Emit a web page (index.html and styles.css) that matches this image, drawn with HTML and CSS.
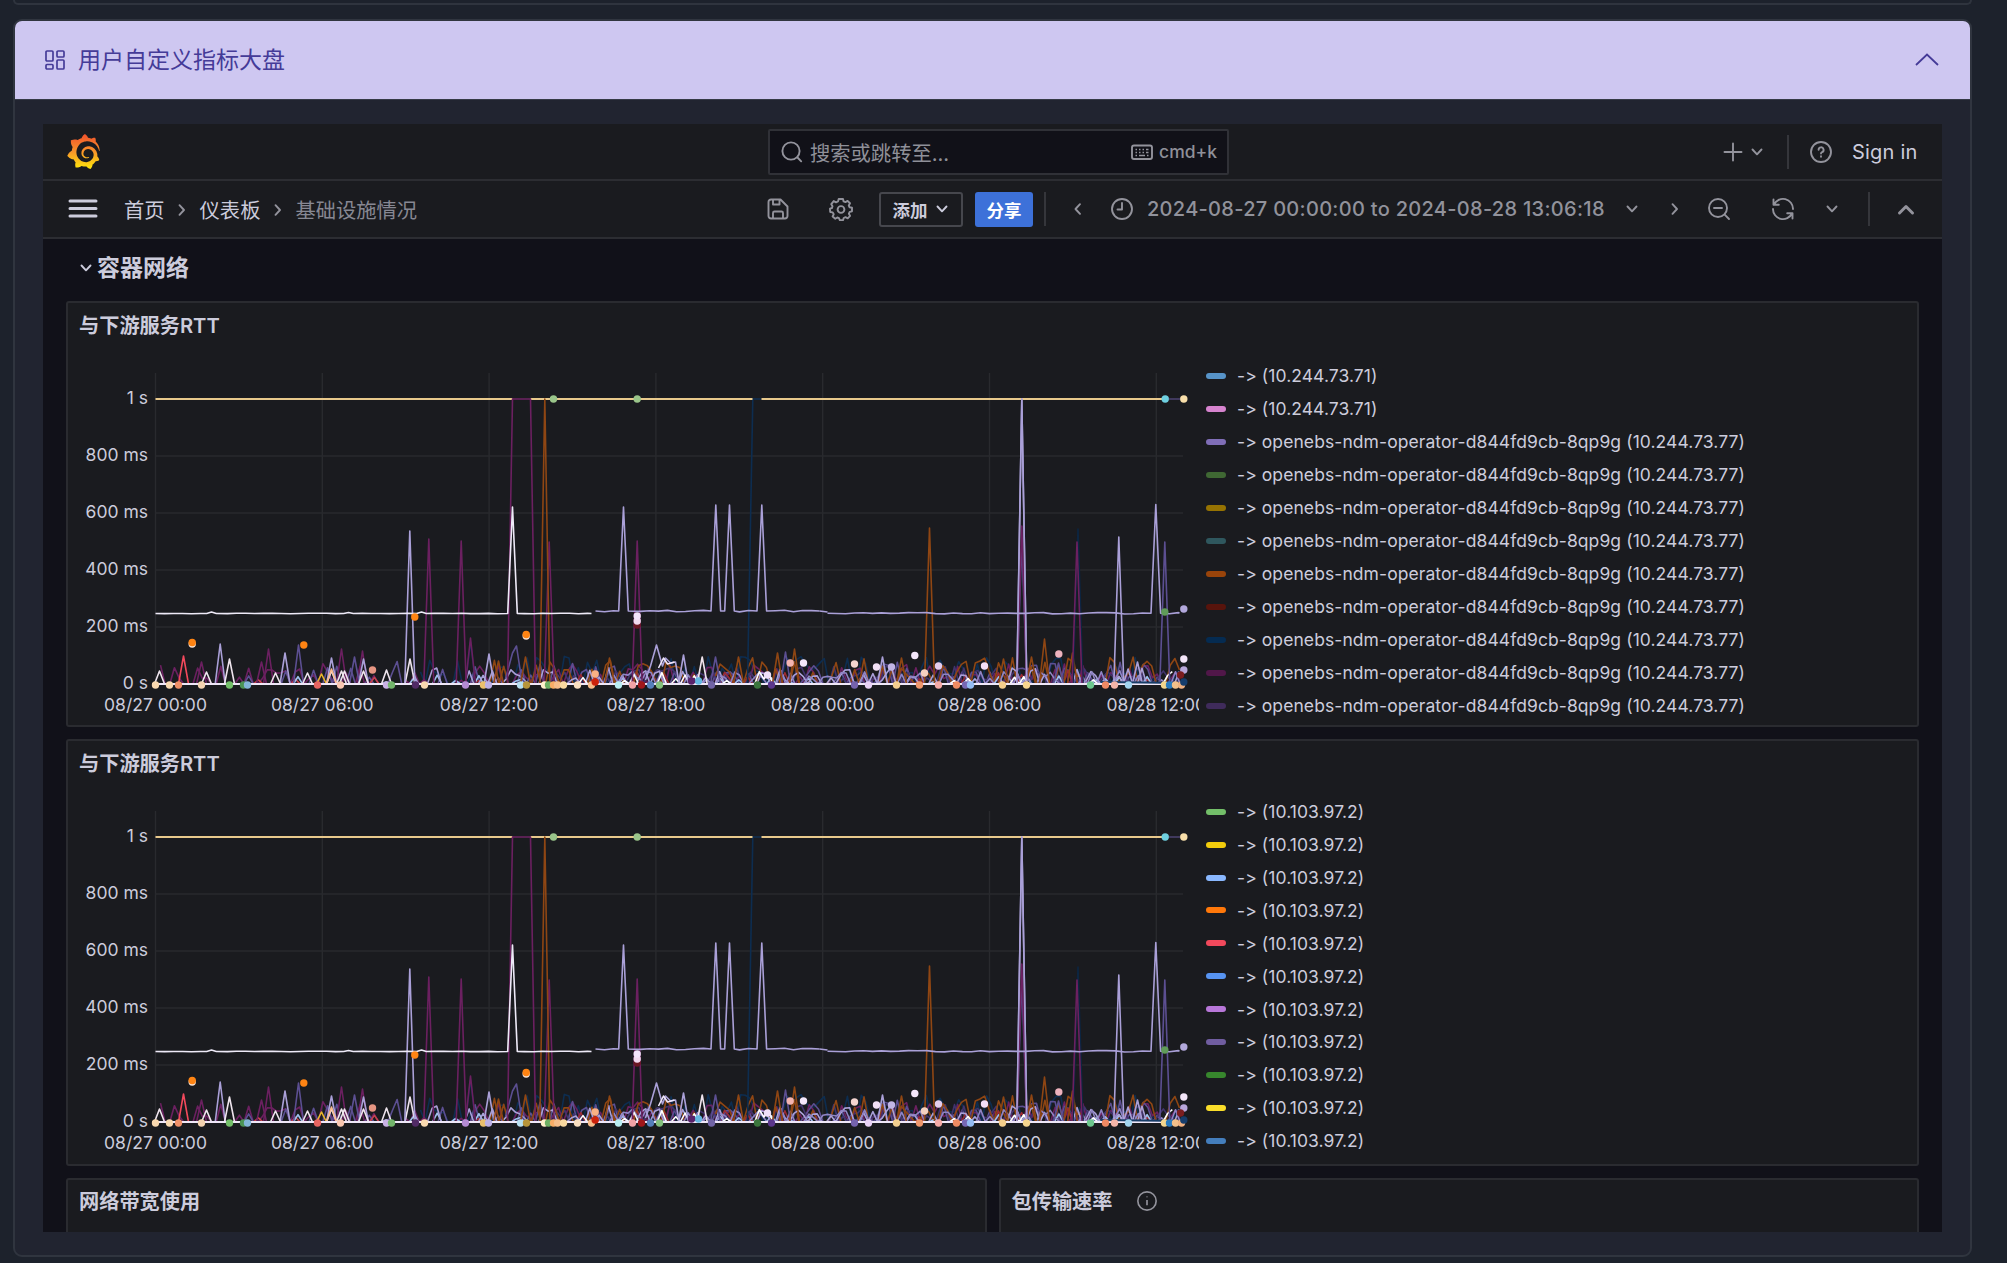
FILE: index.html
```html
<!DOCTYPE html>
<html lang="zh-CN">
<head>
<meta charset="utf-8">
<title>用户自定义指标大盘</title>
<link rel="stylesheet" href="styles.css">
</head>
<body>
<svg class="defs" width="0" height="0">
  <defs>
    <symbol id="down" viewBox="0 0 16 16"><path d="M3.5 5.5 8 10.3l4.500-4.800"/></symbol>
    <symbol id="right" viewBox="0 0 16 16"><path d="M5.500 3.200 10 8l-4.500 4.800"/></symbol>
    <symbol id="left" viewBox="0 0 16 16"><path d="M10 3.200 5.500 8l4.500 4.800"/></symbol>
  </defs>
</svg>
<div class="previous-card"></div>
<section class="card">
  <header class="card-header">
    <svg class="grid-icon" viewBox="0 0 20 20"><rect x="1" y="1" width="7" height="10" rx="1"/><rect x="12" y="1" width="7" height="6" rx="1"/><rect x="1" y="14.500" width="7" height="4.500" rx="1"/><rect x="12" y="10" width="7" height="9" rx="1"/></svg>
    <h1>用户自定义指标大盘</h1>
    <svg class="collapse-icon" viewBox="0 0 24 14"><path d="M1 12 12 1.500 23 12"/></svg>
  </header>
  <div class="card-body">
    <main class="frame">
      <nav class="topnav">
        <svg class="logo" viewBox="0 0 24 24"><defs><linearGradient id="lg" x1="0" y1="1" x2="0" y2="0"><stop offset="0" stop-color="#ffe80a"/><stop offset=".5" stop-color="#f8942a"/><stop offset="1" stop-color="#f0502c"/></linearGradient></defs><path fill="url(#lg)" d="M23.02 10.59a8.578 8.578 0 0 0-.862-3.034 8.911 8.911 0 0 0-1.789-2.445c.337-1.342-.413-2.505-.413-2.505-1.292-.08-2.113.4-2.416.62-.052-.02-.102-.044-.154-.064-.22-.089-.446-.172-.677-.247-.231-.073-.47-.14-.711-.197a9.867 9.867 0 0 0-.875-.161C14.557.753 12.94 0 12.94 0c-1.804 1.145-2.147 2.744-2.147 2.744l-.018.093c-.098.029-.2.057-.298.088-.138.042-.275.094-.413.143-.138.055-.275.107-.41.166a8.869 8.869 0 0 0-1.557.87l-.063-.029c-2.497-.955-4.716.195-4.716.195-.203 2.658.996 4.33 1.235 4.636a11.608 11.608 0 0 0-.607 2.635C1.636 12.677.953 15.014.953 15.014c1.926 2.214 4.171 2.351 4.171 2.351.003-.002.006-.002.006-.005.285.509.615.994.986 1.446.156.19.32.371.488.548-.704 2.009.099 3.68.099 3.68 2.144.08 3.553-.937 3.849-1.173a9.784 9.784 0 0 0 3.164.501h.08l.055-.003.107-.002.103-.005.003.002c1.010 1.440 2.788 1.646 2.788 1.646 1.264-1.332 1.337-2.653 1.337-2.940v-.058c0-.02-.003-.039-.003-.06.265-.187.52-.387.758-.6a7.875 7.875 0 0 0 1.415-1.700c1.430.083 2.437-.885 2.437-.885-.236-1.490-1.085-2.216-1.264-2.354l-.018-.013-.016-.013a.217.217 0 0 1-.031-.02c.008-.092.016-.18.02-.27.011-.162.016-.323.016-.48v-.253l-.005-.098-.008-.135a1.891 1.891 0 0 0-.01-.13c-.003-.042-.008-.083-.013-.125l-.016-.124-.018-.122a6.215 6.215 0 0 0-2.032-3.730 6.015 6.015 0 0 0-3.222-1.460 6.292 6.292 0 0 0-.85-.048l-.107.002h-.063l-.044.003-.104.008a4.777 4.777 0 0 0-3.335 1.695c-.332.4-.592.84-.768 1.297a4.594 4.594 0 0 0-.312 1.817l.003.091c.005.055.007.11.013.164a3.615 3.615 0 0 0 .698 1.820 3.530 3.530 0 0 0 1.827 1.282c.33.098.66.14.971.137.039 0 .078 0 .114-.002l.063-.003c.02 0 .041-.003.062-.003.034-.002.065-.007.099-.01.007 0 .018-.003.028-.003l.031-.005.06-.008a1.180 1.180 0 0 0 .112-.02c.036-.008.072-.013.109-.024a2.634 2.634 0 0 0 .914-.415c.028-.02.056-.041.085-.065a.248.248 0 0 0 .039-.35.244.244 0 0 0-.309-.06l-.078.042c-.09.044-.184.083-.283.116a2.476 2.476 0 0 1-.475.096c-.028.003-.054.006-.083.006l-.083.002c-.026 0-.054 0-.08-.002l-.102-.006h-.012l-.024.006c-.016-.003-.031-.003-.044-.006-.031-.002-.06-.007-.091-.01a2.590 2.590 0 0 1-.724-.213 2.557 2.557 0 0 1-.667-.438 2.520 2.520 0 0 1-.805-1.475 2.306 2.306 0 0 1-.029-.444l.006-.122v-.023l.002-.031c.003-.021.003-.04.005-.06a3.163 3.163 0 0 1 1.352-2.290 3.120 3.120 0 0 1 .937-.43 2.946 2.946 0 0 1 .776-.101h.06l.07.002.045.003h.026l.07.005a4.041 4.041 0 0 1 1.635.49 3.940 3.940 0 0 1 1.602 1.662 3.770 3.770 0 0 1 .397 1.414l.005.076.003.075c.002.026.002.05.002.075 0 .024.003.052 0 .07v.065l-.002.073-.008.174a6.195 6.195 0 0 1-.08.639 5.100 5.100 0 0 1-.267.927 5.310 5.310 0 0 1-.624 1.130 5.052 5.052 0 0 1-3.237 2.014 4.820 4.820 0 0 1-.649.066l-.039.003h-.287a6.607 6.607 0 0 1-1.716-.265 6.776 6.776 0 0 1-3.400-2.274 6.750 6.750 0 0 1-.746-1.150 6.616 6.616 0 0 1-.714-2.596l-.005-.083-.002-.02v-.056l-.003-.073v-.096l-.003-.104v-.07l.003-.163c.008-.22.026-.45.054-.678a8.707 8.707 0 0 1 .28-1.355c.128-.444.286-.872.473-1.277a7.040 7.040 0 0 1 1.456-2.100 5.925 5.925 0 0 1 .953-.763c.169-.111.343-.213.524-.306.089-.05.182-.091.273-.135.047-.02.093-.042.138-.062a7.177 7.177 0 0 1 .714-.267l.145-.045c.049-.015.098-.026.148-.041.098-.029.197-.052.296-.076.049-.013.1-.02.15-.033l.15-.032.151-.028.076-.013.075-.01.153-.024c.057-.01.114-.013.171-.023l.169-.021c.036-.003.073-.008.106-.01l.073-.008.036-.003.042-.002c.057-.003.114-.008.171-.01l.086-.006h.023l.037-.003.145-.007a7.999 7.999 0 0 1 1.708.125 7.917 7.917 0 0 1 2.048.68 8.253 8.253 0 0 1 1.672 1.090l.09.077.089.078c.06.052.114.107.171.159.057.052.112.106.166.16.052.055.107.107.159.164a8.671 8.671 0 0 1 1.410 1.978c.012.026.028.052.04.078l.04.078.075.156c.023.051.05.1.07.153l.065.15a8.848 8.848 0 0 1 .45 1.340.19.19 0 0 0 .201.142.186.186 0 0 0 .172-.184c.01-.246.002-.532-.024-.856z"/></svg>
        <div class="search">
          <svg class="icon i24" viewBox="0 0 24 24"><circle cx="11" cy="11" r="8.600"/><path d="m17.500 17.500 3.700 3.800"/></svg>
          <span class="placeholder">搜索或跳转至...</span>
          <svg class="icon i24" viewBox="0 0 24 24"><rect x="2" y="5.500" width="20" height="13.500" rx="2"/><path class="keys" d="M5.500 9.500h1.500m2 0h1.500m2 0H14m2 0h2.500M5.500 12.500H7m2 0h1.500m2 0H14m2 0h2.500M5.500 15.500H7m2 0h6m2 0h1.500"/></svg>
          <kbd>cmd+k</kbd>
        </div>
        <div class="account">
          <svg class="icon i24" viewBox="0 0 24 24"><path d="M12 3.500v17M3.500 12h17"/></svg>
          <svg class="icon i16 plus-caret"><use href="#down"/></svg>
          <i class="rule"></i>
          <svg class="icon i24 help" viewBox="0 0 24 24"><circle cx="12" cy="12" r="10"/><path d="M9.600 9.800a2.500 2.500 0 1 1 3.500 2.300c-.8.400-1.100.7-1.100 1.500M12 16.200v.6"/></svg>
          <a>Sign in</a>
        </div>
      </nav>
      <div class="toolbar">
        <svg class="menu" viewBox="0 0 30 20"><path d="M2 2h26M2 9.500h26M2 17h26"/></svg>
        <div class="crumbs">
          <a>首页</a><svg class="icon i16"><use href="#right"/></svg><a>仪表板</a><svg class="icon i16"><use href="#right"/></svg><span>基础设施情况</span>
        </div>
        <div class="tools">
          <svg class="icon i24 save" viewBox="0 0 24 24"><path d="M5 2.500h9.500l7 7V19a2.500 2.500 0 0 1-2.500 2.500H5A2.500 2.500 0 0 1 2.500 19V5A2.500 2.500 0 0 1 5 2.500ZM7 2.500v5h6.500v-5M7 21.500v-5.500a1.500 1.500 0 0 1 1.500-1.500h7a1.500 1.500 0 0 1 1.500 1.500v5.500"/></svg>
          <svg class="icon i24 gear" viewBox="0 0 24 24"><path d="m9.700 2-.7 2.500-2 .9-2.300-1.300L2.300 7.200l1.200 2L3 11l-2 .6.2 3.400 2.500.4 1 1.900-1.100 2.200 2.700 2.200 2-1.200 1.700.7.800 2h3.200l.7-2.200 1.800-.8 2.200 1.100 2.400-2.400-1.200-2.200.8-1.800 2.300-.6v-3.500l-2.400-.5-.8-1.800L21 6.200l-2.400-2.300-2.200 1.200-1.800-.7L14 2Z"/><circle cx="12" cy="12.500" r="3.400"/></svg>
          <button class="add">添加<svg class="i16"><use href="#down"/></svg></button>
          <button class="share">分享</button>
          <i class="rule r1"></i>
          <svg class="icon i16 prev"><use href="#left"/></svg>
          <svg class="icon i24 clock" viewBox="0 0 24 24"><circle cx="12" cy="12" r="10"/><path d="M12 6v6.500H7.500"/></svg>
          <span class="range">2024-08-27 00:00:00 to 2024-08-28 13:06:18</span>
          <svg class="icon i16 range-caret"><use href="#down"/></svg>
          <svg class="icon i16 next"><use href="#right"/></svg>
          <svg class="icon i24 zoom" viewBox="0 0 24 24"><circle cx="11" cy="11" r="9"/><path d="M7 11h8M17.700 17.700l4.300 4.300"/></svg>
          <svg class="icon i24 refresh" viewBox="0 0 24 24"><path d="M2.500 2.500v5.300h5.300M3 7.500A10 10 0 0 1 22 12M21.500 21.500v-5.300h-5.300M21 16.500A10 10 0 0 1 2 12"/></svg>
          <svg class="icon i16 refresh-caret"><use href="#down"/></svg>
          <i class="rule r2"></i>
          <svg class="icon i24 kiosk" viewBox="0 0 24 24"><path d="m5.500 16 6.500-6.500 6.500 6.500"/></svg>
        </div>
      </div>
      <div class="canvas">
        <h2><svg class="i16"><use href="#down"/></svg>容器网络</h2>
        <section class="panel">
          <h3>与下游服务RTT</h3>
          <div class="panel-body"><svg class="chart" viewBox="0 0 1131 380"></svg><ul class="legend" data-legend="first"></ul></div>
        </section>
        <section class="panel">
          <h3>与下游服务RTT</h3>
          <div class="panel-body"><svg class="chart" viewBox="0 0 1131 380"></svg><ul class="legend second" data-legend="second"></ul></div>
        </section>
        <div class="row">
          <section class="panel"><h3>网络带宽使用</h3></section>
          <section class="panel"><h3>包传输速率<svg class="icon info" viewBox="0 0 24 24"><circle cx="12" cy="12" r="10"/><path d="M12 11v5.500M12 7.200v.8"/></svg></h3></section>
        </div>
      </div>
    </main>
  </div>
</section>
<script src="charts.js"></script>
</body>
</html>
```
FILE: styles.css
```css
* { box-sizing: border-box; }
body { margin: 0; height: 1263px; overflow: hidden; background: #1d222c; font-family: Inter, "Noto Sans CJK SC", sans-serif; font-feature-settings: "calt" 0; color: #ccccdc; }
h1, h2, h3, ul { margin: 0; padding: 0; font-weight: 400; }
svg { display: block; flex: none; }
.defs { height: 0; }
.previous-card { width: 1959px; height: 5px; margin-left: 13px; border: 2px solid #2f343e; border-top: 0; border-radius: 0 0 8px 8px; }
.card { width: 1959px; height: 1238px; margin: 14px 0 0 13px; border: 2px solid #30353f; border-radius: 9px; background: #212430; overflow: hidden; }
.card-header { display: flex; align-items: center; height: 78px; padding: 0 31px 0 30px; background: #cec7f1; color: #453b98; }
.card-header h1 { margin: 0 auto 0 13px; font-size: 23px; line-height: 30px; }
.grid-icon { width: 20px; height: 20px; fill: none; stroke: currentColor; stroke-width: 1.7; }
.collapse-icon { width: 24px; height: 14px; fill: none; stroke: currentColor; stroke-width: 1.8; }
.card-body { padding: 24px 28px 23px; border-top: 1px solid #363b47; }
.frame { height: 1108px; background: #111119; overflow: hidden; }

.i16, .i24 { fill: none; stroke: currentColor; stroke-width: 1.9; stroke-linecap: round; stroke-linejoin: round; }
.i16 { width: 16px; height: 16px; }
.i24 { width: 24px; height: 24px; }
.icon { color: #93939c; }
.rule { width: 2px; height: 34px; background: #35363b; }

.topnav { display: flex; align-items: center; height: 57px; padding: 0 24px 0 25px; background: #1a1b1f; border-bottom: 2px solid #2c2d32; }
.logo { width: 35px; height: 35px; margin-left: -2px; }
.search { display: flex; align-items: center; width: 461px; height: 46px; margin-left: 667px; padding: 0 10px; background: #111118; border: 2px solid #303137; border-radius: 2px; color: #8f9099; }
.placeholder { margin: 0 auto 0 6px; font-size: 20.300px; }
kbd { margin-left: 5px; font: 500 17.500px Inter, sans-serif; }
.keys { stroke-width: 1.4; stroke-linecap: butt; }
.account { display: flex; align-items: center; margin-left: auto; }
.account a { width: 66px; font-size: 20px; letter-spacing: .2px; white-space: nowrap; }
.plus-caret { margin-left: 4px; }
.account .rule { margin: 0 20px 0 22px; }
.help { margin-right: 19px; }

.toolbar { display: flex; align-items: center; height: 58px; padding: 0 24px 0 25px; background: #1a1b1f; border-bottom: 2px solid #2c2d32; }
.menu { width: 30px; height: 20px; stroke: #ccccdc; stroke-width: 3; stroke-linecap: round; }
.crumbs { display: flex; align-items: center; margin-left: 26px; font-size: 20.300px; white-space: nowrap; color: #ccccdc; }
.crumbs svg { margin: 2px 9.500px 0; }
.crumbs span { color: #878893; }
.tools { display: flex; align-items: center; margin-left: auto; white-space: nowrap; }
button { display: flex; align-items: center; justify-content: center; height: 35px; padding: 0; border-radius: 3px; font: 600 17.500px Inter, "Noto Sans CJK SC", sans-serif; margin-right: 12px; }
.add { width: 84px; gap: 6px; color: #ccccdc; background: transparent; border: 2px solid #46474d; }
.share { width: 58px; margin-right: 11px; color: #fff; background: #3d71d9; border: 0; }
.save { margin-right: 39px; }
.gear { margin-right: 26px; }
.r1 { margin-right: 24px; }
.prev { margin-right: 24px; }
.clock { margin-right: 13px; }
.range { width: 458px; margin-right: 19px; font-size: 20px; font-weight: 500; letter-spacing: .3px; color: #91929b; }
.range-caret { margin-right: 27px; }
.next { margin-right: 24px; }
.zoom { margin-right: 40px; }
.refresh { margin-right: 29px; }
.refresh-caret { margin-right: 28px; }
.r2 { margin-right: 24px; }
.kiosk { stroke-width: 3; }

.canvas { display: flex; flex-direction: column; gap: 12px; padding: 0 23px; }
h2 { display: flex; align-items: center; gap: 3px; height: 50px; padding: 3px 0 0 12px; font-size: 23px; font-weight: 600; }
h2 svg { margin-top: 4px; }
.panel { height: 426.300px; background: #1a1b1f; border: 2px solid #2a2b30; border-radius: 3px; overflow: hidden; }
h3 { display: flex; align-items: center; height: 46px; padding: 0 0 4px 11px; font-size: 20.200px; font-weight: 600; }
.panel-body { display: flex; height: 378px; }
.chart { width: 1131px; height: 380px; }
.chart text { font: 400 17.500px Inter, sans-serif; fill: #ccccdc; }
.grid { stroke: #292a2e; stroke-width: 1.4; }
.line { fill: none; stroke-width: 1.6; stroke-linejoin: round; }
.legend { list-style: none; padding: 10px 0 0 7px; height: 367px; overflow: hidden; }
.legend li { display: flex; align-items: center; gap: 11px; height: 33px; font-size: 17.500px; letter-spacing: .08px; line-height: 33px; white-space: nowrap; }
.legend i { width: 20px; height: 6px; border-radius: 3px; }
.legend.second { padding-top: 8px; }
.legend.second li { height: 32.900px; }
.row { display: grid; grid-template-columns: 1fr 1fr; gap: 12px; }
.info { width: 22px; height: 22px; margin-left: 24px; fill: none; stroke: currentColor; stroke-width: 1.8; }
```
FILE: charts.js
```js
// Plot area: 1029px wide, 285px tall for 0..1s; values below are pixel offsets from the axes.
const LEFT = 87.5, BASE = 335, TOP = 285, STEP = 4.64;

const legends = {
  first: [['#5794c9', '-> (10.244.73.71)'], ['#d683ce', '-> (10.244.73.71)']].concat(
    ['#806eb7', '#3f6833', '#967302', '#2f575e', '#99440a', '#58140c', '#052b51', '#511749', '#3f2b5b']
      .map(c => [c, '-> openebs-ndm-operator-d844fd9cb-8qp9g (10.244.73.77)'])),
  second: ['#73bf69', '#f2cc0c', '#8ab8ff', '#ff780a', '#f2495c', '#5794f2', '#b877d9', '#705da0', '#37872d', '#fade2a', '#447ebc']
    .map(c => [c, '-> (10.103.97.2)'])
};

let seed = 71;
const rand = () => (seed = (seed * 16807) % 2147483647) / 2147483647;
const path = pts => 'M' + pts.map(p => (LEFT + p[0]).toFixed(1) + ' ' + (BASE - p[1]).toFixed(1)).join('L');
const line = (color, pts) => `<path class="line" stroke="${color}" d="${path(pts)}"/>`;
const dot = (color, x, h) => `<circle cx="${LEFT + x}" cy="${BASE - h}" r="3.700" fill="${color}"/>`;
const spike = (color, x, h, base = 0) => line(color, [[x - 5, base], [x, h], [x + 5, base]]);

function noise(color, from, to, chance, low, high) {
  const pts = [];
  for (let x = from; x <= to; x += STEP) pts.push([x, rand() < chance ? low + rand() * (high - low) : 0]);
  return line(color, pts);
}
function wander(color, from, to, level, amp, spikes) {
  const pts = [[from, level], [to, level]];
  for (let x = from + 9; x < to; x += 9) {
    if (spikes.some(s => Math.abs(s[0] - x) < 9)) continue;
    pts.push([x, level + (rand() - .5) * amp]);
  }
  spikes.forEach(s => pts.push([s[0] - 4.8, level], s, [s[0] + 4.8, level]));
  return line(color, pts.sort((a, b) => a[0] - b[0]));
}

function drawChart() {
  let s = '';
  for (let i = 0; i < 7; i++) s += `<path class="grid" d="M${LEFT + i * 166.8} 24V335"/>`;
  ['0 s', '200 ms', '400 ms', '600 ms', '800 ms', '1 s'].forEach((t, i) => {
    const y = BASE - i * 57;
    s += `<path class="grid" d="M${LEFT} ${y}H1115"/><text x="80" y="${y + 5}" text-anchor="end">${t}</text>`;
  });
  ['08/27 00:00', '08/27 06:00', '08/27 12:00', '08/27 18:00', '08/28 00:00', '08/28 06:00', '08/28 12:00'].forEach((t, i) => {
    s += `<text x="${LEFT + i * 166.8}" y="362" text-anchor="middle">${t}</text>`;
  });

  const magenta = '#6b2060', brown = '#8f4613', navy = '#0d2d50', lilac = '#aaa0d8', violet = '#5c4f92';
  s += noise(navy, 265, 1028, .6, 4, 28);
  s += noise(magenta, 5, 250, .5, 3, 22) + noise(magenta, 250, 1028, .5, 3, 20);
  s += noise(violet, 5, 250, .18, 6, 24) + noise(violet, 250, 1028, .4, 4, 22);
  s += noise('#41336c', 400, 1028, .6, 3, 18);
  s += noise('#c8434d', 24, 240, .1, 4, 12) + noise('#9b2b32', 300, 1020, .12, 3, 14);
  s += noise(brown, 325, 560, .25, 8, 25) + noise(brown, 560, 1024, .6, 5, 27);
  s += noise('#9ec1ee', 110, 1020, .1, 2, 9);
  s += noise(lilac, 258, 1028, .45, 3, 17) + noise('#8f84c4', 440, 1028, .4, 4, 14);
  s += noise('#fff', 395, 1020, .15, 3, 13);
  [[113, 35], [207, 33], [186, 35], [46, 22], [106, 22]].forEach(p => s += spike(magenta, ...p));
  [[64.700, 40], [129.500, 31], [176, 26], [208, 25], [333.500, 30], [528, 29], [727, 27], [982, 22]].forEach(p => s += spike(lilac, ...p));
  [[143, 39], [199, 27], [560, 27], [630, 32], [903, 21]].forEach(p => s += spike(violet, ...p));
  s += line(violet, [[350, 5], [357, 31], [361, 38], [366, 5], [371, 0]]);
  s += line(lilac, [[490, 4], [495, 18], [501, 39], [507, 18], [510, 26], [515, 21], [520, 22], [523, 4]]);
  s += line('#f0e6fa', [[503, 16], [508, 26], [512, 20], [519, 22]]);
  [[4, 13], [51, 12], [74, 25], [120, 11], [152, 11], [176, 13], [186, 13], [189, 13], [208, 13], [231, 14], [254.500, 25], [546.700, 27]].forEach(p => s += spike('#eee4ed', ...p));
  [[343, 23], [370, 27], [454, 26], [583, 27], [622, 31], [639, 35], [746, 26], [848, 25], [876, 27], [889, 45], [917, 31]].forEach(p => s += spike(brown, ...p));
  s += spike('#f2495c', 28, 28) + spike('#eab829', 166, 10) + spike('#f9ba8f', 176, 15);

  s += spike(magenta, 273.300, 145) + spike(navy, 315, 42) + spike(magenta, 315, 46) + spike(magenta, 305.700, 143);
  s += line(navy, [[592, 0], [597.300, TOP], [606, TOP]]) + spike('#0c2541', 922.500, 155) + spike(violet, 1009.300, 142);
  [[0, 357], [375, 597], [606, 1008]].forEach(r => s += `<path stroke="#e8c98c" stroke-width="1.9" d="${path([[r[0], TOP], [r[1], TOP]])}"/>`);
  s += `<path stroke="${violet}" stroke-width="1" d="${path([[1011, TOP], [1028, TOP]])}"/>`;
  s += line(magenta, [[352, 0], [357, TOP], [375, TOP], [380, 0]]) + spike(magenta, 393.700, 142) + spike(magenta, 481.700, 143);
  s += spike(brown, 389.300, TOP) + spike(brown, 774, 156) + spike(magenta, 921.500, 142);
  s += spike(lilac, 254.300, 153) + spike(lilac, 866.300, TOP) + spike(violet, 866.300, 142) + spike(magenta, 866.300, 158) + spike(lilac, 866.300, TOP) + spike(lilac, 963.300, 147);
  s += wander('#eeeaf8', 0, 436, 70.500, .5, [[56, 72], [193, 71.500], [266, 72], [357, 177]]);
  s += wander(lilac, 440, 664, 73, 2, [[468, 177], [560.300, 179], [574, 179], [606.300, 179]]);
  s += line(lilac, [[664, 73], [672, 72]]) + wander(lilac, 672, 1024, 70.800, 1.600, [[1000.300, 179.500]]);
  s += `<path stroke="#efe7f8" stroke-width="1.900" d="${path([[0, 0], [1028, 0]])}"/>`;
  s += `<path stroke="#173c67" stroke-width="2" d="${path([[945, 2], [1028, 1]])}"/>`;

  const dots = [['#f9d9b0', 0], ['#f9d9b0', 14], ['#ef9068', 23], ['#f3d2b0', 46], ['#73bf69', 74], ['#4c9455', 88], ['#82b5d8', 92], ['#e76460', 162], ['#f9c6b0', 185], ['#c9b2e5', 231], ['#73b56b', 236], ['#512a65', 260], ['#f9d9b0', 269], ['#b48ad3', 310], ['#eac06d', 328], ['#bcb0e6', 333], ['#b7dff0', 365], ['#b6943a', 371], ['#fff0ca', 389], ['#6daf63', 393], ['#f9ad66', 398], ['#f7be8a', 402], ['#f9d9a0', 408], ['#f9dfc0', 422], ['#f9bd8b', 436], ['#b9edf2', 463], ['#f2a3a6', 477], ['#a1171b', 486], ['#557fbb', 495], ['#82bf7c', 504], ['#7063a5', 556], ['#3b753d', 602], ['#5b368c', 616], ['#7562ac', 699], ['#e8d2f6', 713], ['#f3cf8f', 741], ['#ef966b', 764], ['#f5aaa6', 783], ['#ef8b62', 801], ['#7768b5', 810], ['#93bbf2', 815], ['#f5ce8b', 847], ['#f6d58e', 871], ['#6cc68d', 935], ['#ef8963', 950], ['#f4b5a8', 959], ['#a2d4ef', 973], ['#f3d58c', 1009], ['#287abf', 1014], ['#f2bf8a', 1020], ['#efb080', 1026]];
  dots.forEach(d => s += dot(d[0], d[1], -1));
  [['#9ac58a', 398, 285], ['#9ac58a', 481.700, 285], ['#6ed0e0', 1009.700, 285], ['#f8dfaa', 1028.300, 285], ['#b2a8db', 1028.300, 75], ['#5f9b59', 1009.300, 72],
   ['#f9e2d2', 36.700, 40], ['#ff8413', 36.700, 41.500], ['#ff8413', 148.300, 39], ['#ff8413', 259.300, 67], ['#f9e2d2', 370.700, 48], ['#ff8413', 370.700, 49.500],
   ['#6b1722', 481.700, 59], ['#f1d9ee', 481.700, 63], ['#f3e5fb', 481.700, 68], ['#f9b084', 439.700, 10], ['#cc220c', 439.700, 2],
   ['#f4b5b0', 634.700, 21], ['#f5e7fb', 648, 21], ['#efe0f8', 612, 9], ['#f5e7fb', 759.300, 28.500], ['#f4d5d0', 699, 20], ['#f2e0f5', 721, 17], ['#c1b5e5', 736, 17],
   ['#e3cdef', 783, 18], ['#f5dff8', 829, 18], ['#edb2bd', 903.300, 30], ['#f4d0c0', 769, 11], ['#64b7e1', 543, 3], ['#59226b', 536, 3], ['#e69683', 217, 14],
   ['#f4e6f9', 1028.300, 25], ['#b8a6da', 1028.300, 14], ['#7a1d1f', 1025, 9], ['#163d6c', 1028.300, 2]].forEach(d => s += dot(...d));
  return s;
}

document.querySelectorAll('.chart').forEach(el => { seed = 71; el.innerHTML = drawChart(); });
document.querySelectorAll('.legend').forEach(el => {
  el.innerHTML = legends[el.dataset.legend].map(([c, t]) => `<li><i style="background:${c}"></i>${t.replace('>', '&gt;')}</li>`).join('');
});
```
